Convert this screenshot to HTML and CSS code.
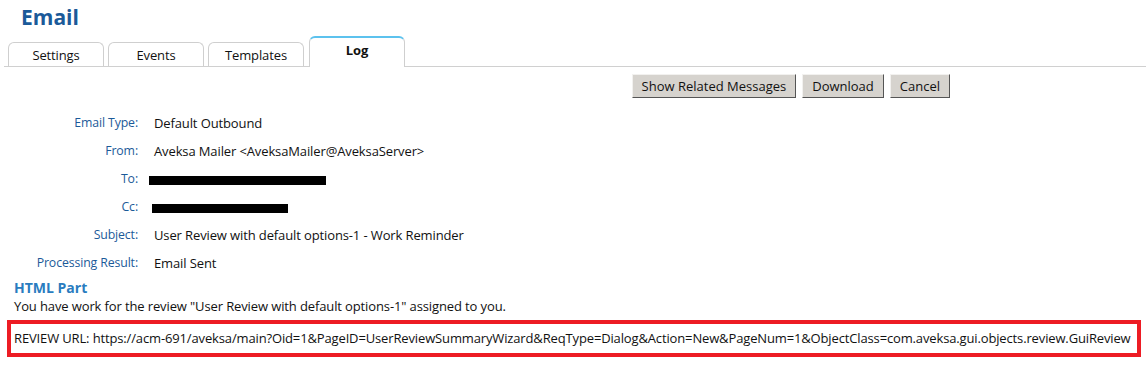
FILE: index.html
```html
<!DOCTYPE html>
<html lang="en">
<head>
  <meta charset="UTF-8">
  <title>Email - Log</title>
  <link rel="stylesheet" href="styles.css">
</head>
<body>
  <h1 class="page-title">Email</h1>

  <div class="tabs">
    <div class="tab">Settings</div>
    <div class="tab">Events</div>
    <div class="tab">Templates</div>
    <div class="tab active">Log</div>
  </div>

  <div class="actions">
    <button class="btn">Show Related Messages</button>
    <button class="btn">Download</button>
    <button class="btn">Cancel</button>
  </div>

  <div class="fields">
    <div class="label">Email Type:</div>
    <div class="value">Default Outbound</div>
    <div class="label">From:</div>
    <div class="value">Aveksa Mailer &lt;AveksaMailer@AveksaServer&gt;</div>
    <div class="label">To:</div>
    <div class="value"><span class="redact redact-to"></span></div>
    <div class="label">Cc:</div>
    <div class="value"><span class="redact redact-cc"></span></div>
    <div class="label">Subject:</div>
    <div class="value">User Review with default options-1 - Work Reminder</div>
    <div class="label">Processing Result:</div>
    <div class="value">Email Sent</div>
  </div>

  <div class="part">
    <h2 class="part-title">HTML Part</h2>
    <p class="part-text">You have work for the review "User Review with default options-1" assigned to you.</p>
    <div class="url-box">REVIEW URL: https://acm-691/aveksa/main?Oid=1&amp;PageID=UserReviewSummaryWizard&amp;ReqType=Dialog&amp;Action=New&amp;PageNum=1&amp;ObjectClass=com.aveksa.gui.objects.review.GuiReview</div>
  </div>
</body>
</html>
```

FILE: styles.css
```css
body {
  margin: 0;
  font-family: "Open Sans", "DejaVu Sans", sans-serif;
  font-size: 13px;
  letter-spacing: -0.12px;
  color: #111;
  background: #fff;
}

.page-title {
  margin: 0;
  padding: 4px 0 0 21px;
  height: 34px;
  box-sizing: border-box;
  font-size: 21px;
  font-weight: bold;
  color: #1b5a99;
  line-height: 26px;
  letter-spacing: 0;
}

.tabs {
  display: flex;
  align-items: flex-end;
  gap: 4px;
  height: 33px;
  margin-left: 4px;
  padding-left: 4px;
  border-bottom: 1px solid #d0d0d0;
  box-sizing: border-box;
}

.tab {
  width: 94px;
  height: 23px;
  border: 1px solid #cfcfcf;
  border-bottom: none;
  border-radius: 6px 6px 0 0;
  text-align: center;
  line-height: 24px;
  color: #111;
  background: #fff;
}

.tab.active {
  height: 29px;
  margin-left: 1px;
  margin-bottom: -1px;
  border-top: 2px solid #5cc2ee;
  font-weight: bold;
  line-height: 24px;
}

.actions {
  display: flex;
  justify-content: flex-end;
  gap: 6px;
  padding: 7px 196px 0 0;
}

.btn {
  font-family: "Open Sans", "DejaVu Sans", sans-serif;
  font-size: 13px;
  color: #111;
  background: #d6d3ce;
  border: 1px solid;
  border-color: #f2f1ef #555 #555 #f2f1ef;
  height: 24px;
  padding: 0 9px;
  line-height: 20px;
}

.fields {
  display: grid;
  grid-template-columns: 138px auto;
  column-gap: 16px;
  margin-top: 11px;
}

.label,
.value {
  height: 28px;
  line-height: 28px;
}

.label {
  text-align: right;
  color: #1b5a99;
  font-size: 12.3px;
}

.redact {
  display: inline-block;
  background: #000;
  height: 9px;
  vertical-align: middle;
}

.redact-to {
  width: 177px;
  margin-left: -5px;
}

.redact-cc {
  width: 136px;
  margin-left: -2px;
}

.part {
  padding: 2px 5px 0 7px;
}

.part-title {
  margin: 0 0 0 7px;
  font-size: 14px;
  font-weight: bold;
  color: #2a7cbf;
  line-height: 18px;
  letter-spacing: 0;
}

.part-text {
  margin: 0 0 5px 7px;
  line-height: 18px;
}

.url-box {
  border: 4px solid #ed1c24;
  padding: 0 0 0 3px;
  line-height: 29px;
  white-space: nowrap;
  letter-spacing: -0.14px;
}
```
